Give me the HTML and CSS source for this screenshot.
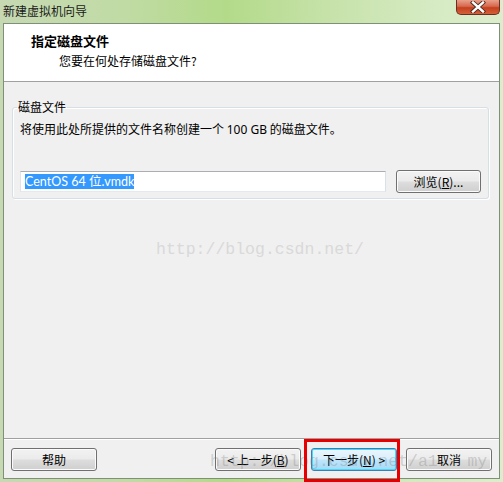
FILE: index.html
```html
<!DOCTYPE html>
<html lang="zh-CN">
<head>
<meta charset="utf-8">
<title>新建虚拟机向导</title>
<link rel="stylesheet" href="styles.css">
</head>
<body>
<div class="window">
  <div class="titlebar">
    <span class="title">新建虚拟机向导</span>
    <div class="close">
      <svg width="18" height="12" viewBox="0 0 18 12">
        <path d="M4 1.5 L14 10.5 M14 1.5 L4 10.5" stroke="#4a2a20" stroke-width="4.2" stroke-linecap="square" fill="none"/>
        <path d="M4 1.5 L14 10.5 M14 1.5 L4 10.5" stroke="#ffffff" stroke-width="2.4" stroke-linecap="square" fill="none"/>
      </svg>
    </div>
  </div>
  <div class="client">
    <div class="header">
      <div class="h-title">指定磁盘文件</div>
      <div class="h-sub">您要在何处存储磁盘文件?</div>
    </div>
    <div class="body">
      <fieldset class="group">
        <legend>磁盘文件</legend>
        <div class="desc">将使用此处所提供的文件名称创建一个 <span class="lat">100 GB</span> 的磁盘文件。</div>
        <div class="filerow">
          <div class="input"><span class="sel">CentOS 64 位.vmdk</span></div>
          <button class="btn browse">浏览(<u>R</u>)...</button>
        </div>
      </fieldset>
    </div>
    <div class="footer">
      <button class="btn">帮助</button>
      <div class="spacer"></div>
      <button class="btn">&lt; 上一步(<u>B</u>)</button>
      <button class="btn default">下一步(<u>N</u>) &gt;</button>
      <button class="btn">取消</button>
    </div>
  </div>
  <div class="wm wm-mid">http://blog.csdn.net/</div>
  <div class="wm wm-bot">http://blog.csdn.net/a1   my</div>
  <div class="redbox"></div>
</div>
</body>
</html>
```
FILE: styles.css
```css
html, body {
  margin: 0;
  padding: 0;
}
body {
  width: 503px;
  height: 482px;
  overflow: hidden;
  font-family: "Noto Sans CJK SC", sans-serif;
  font-size: 12px;
  color: #000;
}
.window {
  position: relative;
  width: 503px;
  height: 482px;
  display: flex;
  flex-direction: column;
  background: linear-gradient(to right, #c6d9b3 0%, #c0dba4 25%, #b3da89 45%, #c6e2a9 65%, #d5eac2 85%, #dcedcc 100%);
  box-sizing: border-box;
}
.titlebar {
  height: 23px;
  display: flex;
  justify-content: space-between;
  align-items: flex-start;
  flex: none;
}
.title {
  font-size: 12px;
  line-height: 16px;
  margin: 3px 0 0 3px;
  color: #1a1a1a;
}
.close {
  width: 44px;
  height: 15px;
  margin-right: 3px;
  box-sizing: border-box;
  border: 1px solid #6b2e22;
  border-top: none;
  border-radius: 0 0 5px 5px;
  background: linear-gradient(to bottom, #e8a08c 0%, #d7684c 45%, #c4401e 55%, #d55f3a 100%);
  display: flex;
  align-items: center;
  justify-content: center;
}
.client {
  flex: 1;
  margin: 0 3px 3px 3px;
  border: 1px solid #7f8f78;
  background: #f0f0f0;
  display: flex;
  flex-direction: column;
}
.header {
  height: 57px;
  background: #ffffff;
  border-bottom: 1px solid #a0a0a0;
  padding: 0 0 0 27px;
  flex: none;
}
.h-title {
  font-weight: bold;
  font-size: 13px;
  line-height: 17px;
  margin-top: 8px;
}
.h-sub {
  font-size: 12px;
  line-height: 16px;
  margin: 4px 0 0 28px;
}
.body {
  flex: 1;
  padding: 17px 10px 0 8px;
}
.group {
  margin: 0;
  padding: 0 7px 5px 7px;
  border: 1px solid #d5dfe5;
  border-radius: 3px;
  box-shadow: inset 1px 1px 0 #fff, 1px 1px 0 #fff;
}
.group legend {
  font-size: 12px;
  line-height: 16px;
  padding: 0 1px;
  margin-left: -3px;
}
.desc {
  line-height: 16px;
  margin-top: 6px;
}
.lat {
  font-family: "Noto Sans", sans-serif;
}
.filerow {
  display: flex;
  align-items: center;
  gap: 10px;
  margin-top: 32px;
}
.input {
  flex: 1;
  height: 21px;
  box-sizing: border-box;
  background: #fff;
  border: 1px solid #abadb3;
  border-color: #abadb3 #dbdfe6 #e3e9ef #e2e3ea;
  padding: 2px 0 0 4px;
  font-family: "Lato", "Noto Sans CJK SC", sans-serif;
  font-size: 12.5px;
  line-height: 15px;
  display: flex;
}
.sel {
  background: #3399ff;
  color: #fff;
  height: 15px;
}
.btn {
  width: 86px;
  height: 23px;
  box-sizing: border-box;
  border: 1px solid #707070;
  border-radius: 3px;
  background: linear-gradient(to bottom, #f2f2f2 0%, #ebebeb 48%, #dddddd 52%, #cfcfcf 100%);
  box-shadow: inset 0 0 0 1px #fbfbfb;
  font-family: "Noto Sans CJK SC", sans-serif;
  font-size: 12px;
  line-height: 16px;
  color: #000;
  padding: 0;
  flex: none;
}
.browse {
  width: 85px;
}
.btn.default {
  border-color: #3c7fb1;
  background: linear-gradient(to bottom, #eaf6fd 0%, #d9f0fc 48%, #bee6fd 52%, #a7d9f5 100%);
  box-shadow: inset 0 0 0 1px #48d8fb;
}
.footer {
  flex: none;
  border-top: 1px solid #a0a0a0;
  box-shadow: inset 0 1px 0 #fff;
  display: flex;
  align-items: center;
  padding: 9px 7px 7px 7px;
  gap: 10px;
}
.footer .btn:last-child {
  margin-left: -1px;
}
.spacer {
  flex: 1;
}
.wm {
  position: absolute;
  font-family: "Liberation Mono", monospace;
  font-size: 16.5px;
  line-height: 20px;
  white-space: pre;
  pointer-events: none;
}
.wm-mid {
  left: 156px;
  top: 240px;
  color: #d9d9d9;
}
.wm-bot {
  left: 210px;
  top: 452px;
  color: rgba(120, 120, 120, 0.3);
}
.redbox {
  position: absolute;
  left: 304px;
  top: 439px;
  width: 96px;
  height: 43px;
  box-sizing: border-box;
  border: 3px solid #e80000;
}
```
